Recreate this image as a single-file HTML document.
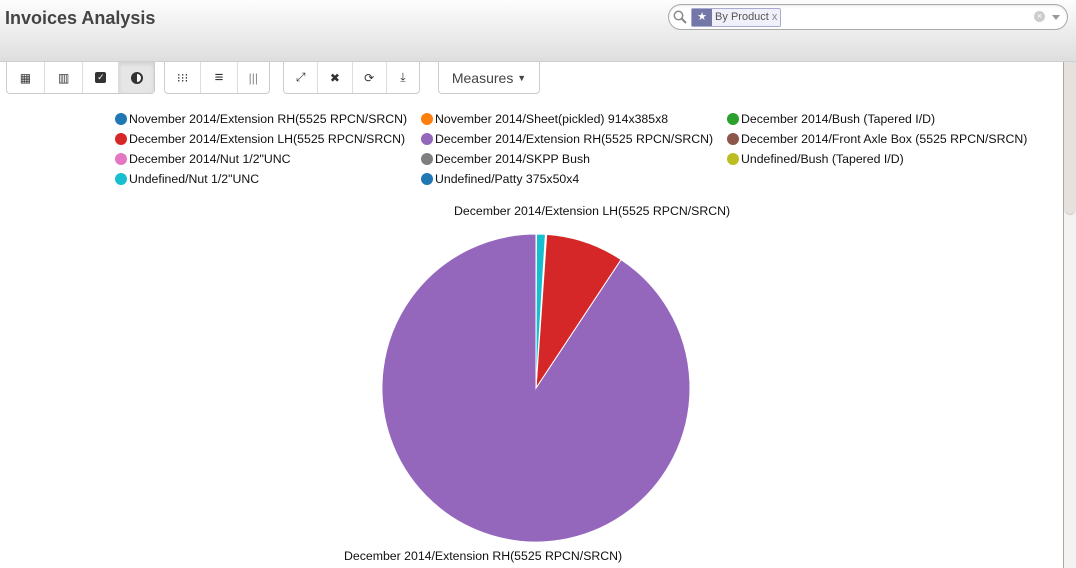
<!DOCTYPE html>
<html><head><style>
body{margin:0;width:1076px;height:568px;overflow:hidden;background:#fff;font-family:"Liberation Sans",sans-serif;position:relative}
.hdr{position:absolute;left:0;top:0;width:1076px;height:61px;background:linear-gradient(#fdfdfd,#dedede);border-bottom:1px solid #cfcfcf}
.title{position:absolute;left:5px;top:8px;font-size:18px;font-weight:bold;color:#444}
.search{position:absolute;left:668px;top:4px;width:398px;height:24px;border:1px solid #aaa;border-radius:13px;background:#fff;box-shadow:inset 0 1px 2px rgba(0,0,0,.1)}
.facet{position:absolute;left:22px;top:3px;height:17px;border:1px solid #a9acd0;background:#f0f0fa;border-radius:2px;font-size:11px;color:#555;line-height:17px}
.facet .ic{display:inline-block;width:20px;height:17px;background:#7277a8;vertical-align:top;text-align:center;color:#fff;font-size:11px}
.btns{position:absolute;top:62px;height:31px;border:1px solid #ccc;border-top:none;border-radius:0 0 4px 4px;display:flex;background:#fff}
.btns div{border-left:1px solid #ddd;display:flex;align-items:center;justify-content:center;color:#333;font-size:12px}
.btns div:first-child{border-left:none}
.leg{position:absolute;font-size:12.3px;color:#111;white-space:nowrap}
.leg i{position:absolute;left:-14px;top:1px;width:12px;height:12px;border-radius:50%}
.sb{position:absolute;left:1063px;top:62px;width:12px;height:506px;border-left:1px solid #aaa;background:#f5f3f1}
</style></head><body>
<div class="hdr"></div>
<div class="title">Invoices Analysis</div>
<div class="search">
<svg style="position:absolute;left:4px;top:5px" width="14" height="14"><circle cx="5.5" cy="5.5" r="4.2" fill="none" stroke="#888" stroke-width="1.5"/><line x1="8.5" y1="8.5" x2="13" y2="13" stroke="#888" stroke-width="2"/></svg>
<div class="facet"><span class="ic">★</span> By Product <span style="color:#888">x</span>&nbsp;</div>
<div style="position:absolute;right:22px;top:6px;width:11px;height:11px;border-radius:50%;background:#ccc;color:#fff;font-size:9px;line-height:11px;text-align:center">×</div>
<div style="position:absolute;right:7px;top:10px;border:4px solid transparent;border-top:5px solid #999"></div>
</div>
<div class="btns" style="left:6px;width:147px"><div style="width:37px">▦</div><div style="width:38px">▥</div><div style="width:35px"><span style="display:inline-block;width:11px;height:11px;background:#333;border-radius:2px;color:#fff;font-size:9px;line-height:11px;text-align:center">✓</span></div><div style="width:35px;background:#e6e6e6;box-shadow:inset 0 2px 4px rgba(0,0,0,.1)"><svg width="12" height="12"><circle cx="6" cy="6" r="5" fill="#fff" stroke="#333" stroke-width="2"/><path d="M6,1 A5,5 0 0 0 6,11 Z" fill="#333"/></svg></div></div>
<div class="btns" style="left:164px;width:104px"><div style="width:36px">⁝⁝⁝</div><div style="width:36px;font-size:15px">≡</div><div style="width:32px;color:#888">|||</div></div>
<div class="btns" style="left:283px;width:135px"><div style="width:34px">⤢</div><div style="width:34px">✖</div><div style="width:34px">⟳</div><div style="width:33px">⤓</div></div>
<div class="btns" style="left:438px;width:100px"><div style="width:100px;font-size:14px;color:#444">Measures&nbsp;<span style="font-size:9px">▼</span></div></div>
<div class="leg" style="left:129px;top:112px"><i style="background:#1f77b4"></i>November 2014/Extension RH(5525 RPCN/SRCN)</div>
<div class="leg" style="left:435px;top:112px"><i style="background:#ff7f0e"></i>November 2014/Sheet(pickled) 914x385x8</div>
<div class="leg" style="left:741px;top:112px"><i style="background:#2ca02c"></i>December 2014/Bush (Tapered I/D)</div>
<div class="leg" style="left:129px;top:132px"><i style="background:#d62728"></i>December 2014/Extension LH(5525 RPCN/SRCN)</div>
<div class="leg" style="left:435px;top:132px"><i style="background:#9467bd"></i>December 2014/Extension RH(5525 RPCN/SRCN)</div>
<div class="leg" style="left:741px;top:132px"><i style="background:#8c564b"></i>December 2014/Front Axle Box (5525 RPCN/SRCN)</div>
<div class="leg" style="left:129px;top:152px"><i style="background:#e377c2"></i>December 2014/Nut 1/2"UNC</div>
<div class="leg" style="left:435px;top:152px"><i style="background:#7f7f7f"></i>December 2014/SKPP Bush</div>
<div class="leg" style="left:741px;top:152px"><i style="background:#bcbd22"></i>Undefined/Bush (Tapered I/D)</div>
<div class="leg" style="left:129px;top:172px"><i style="background:#17becf"></i>Undefined/Nut 1/2"UNC</div>
<div class="leg" style="left:435px;top:172px"><i style="background:#1f77b4"></i>Undefined/Patty 375x50x4</div>
<div class="leg" style="left:454px;top:204px">December 2014/Extension LH(5525 RPCN/SRCN)</div>
<div class="leg" style="left:344px;top:549px">December 2014/Extension RH(5525 RPCN/SRCN)</div>
<svg style="position:absolute;left:0;top:0" width="1076" height="568">
<path d="M536,388 L621,259.6 A154,154 0 1 1 536,234 Z" fill="#9467bd" stroke="#fff" stroke-width="1"/>
<path d="M536,388 L546.7,234.4 A154,154 0 0 1 621,259.6 Z" fill="#d62728" stroke="#fff" stroke-width="1"/>
<path d="M536,388 L536.5,234 A154,154 0 0 1 545.4,234.3 Z" fill="#17becf" stroke="#fff" stroke-width="1"/>
</svg>
<div class="sb"><div style="height:152px;background:#e6e1dc;border-bottom:1px solid #ccc;border-radius:0 0 6px 6px"></div></div>
</body></html>
